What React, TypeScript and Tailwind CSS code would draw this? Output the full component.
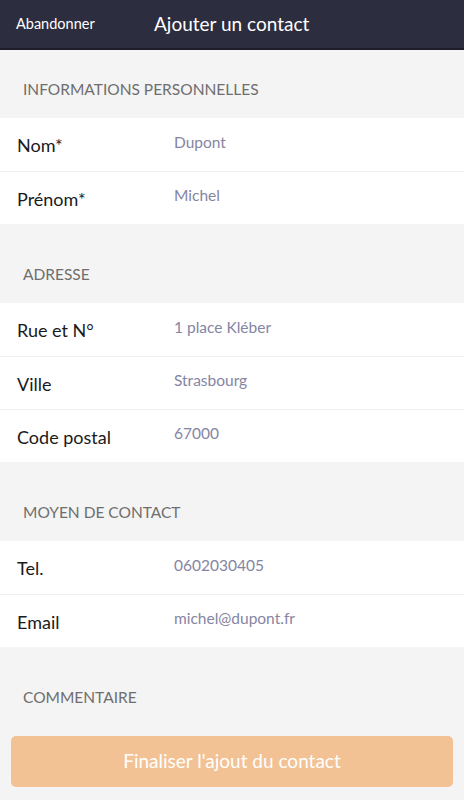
const sections = [
  {
    title: 'INFORMATIONS PERSONNELLES',
    rows: [
      { label: 'Nom*', value: 'Dupont' },
      { label: 'Prénom*', value: 'Michel' },
    ],
  },
  {
    title: 'ADRESSE',
    rows: [
      { label: 'Rue et N°', value: '1 place Kléber' },
      { label: 'Ville', value: 'Strasbourg' },
      { label: 'Code postal', value: '67000' },
    ],
  },
  {
    title: 'MOYEN DE CONTACT',
    rows: [
      { label: 'Tel.', value: '0602030405' },
      { label: 'Email', value: 'michel@dupont.fr' },
    ],
  },
]

export default function App() {
  return (
    <div className="w-[464px] h-[800px] bg-[#f4f4f4] flex flex-col font-['Lato','Open_Sans',sans-serif] overflow-hidden">
      {/* Top bar */}
      <div className="h-[50px] shrink-0 bg-[#2d2d40] border-b-2 border-[#1e1e2a] flex items-center">
        <span className="pl-4 w-[154px] text-[14.5px] text-white">Abandonner</span>
        <span className="text-[19px] text-white">Ajouter un contact</span>
      </div>

      {sections.map((section, i) => (
        <div key={section.title}>
          {/* Section header */}
          <div className={`${i === 0 ? 'pt-[29px]' : 'pt-[40px]'} pb-[19px] pl-[23px] text-[15.5px] leading-[20px] text-[#6e6e6e]`}>
            {section.title}
          </div>
          <div className="bg-white">
            {section.rows.map((row, j) => (
              <div
                key={row.label}
                className={`h-[53px] flex items-center ${j > 0 ? 'border-t border-[#efefef]' : ''}`}
              >
                <span className="w-[174px] pl-[17px] pt-[2px] text-[18px] text-[#1a1a1a]">{row.label}</span>
                <span className="pb-[4px] text-[15.5px] text-[#8585a3]">{row.value}</span>
              </div>
            ))}
          </div>
        </div>
      ))}

      {/* Comment */}
      <div className="pt-[40px] pb-[19px] pl-[23px] text-[15.5px] leading-[20px] text-[#6e6e6e]">COMMENTAIRE</div>

      <div className="px-[11px] pt-[10px]">
        <button className="w-full h-[51px] rounded-[5px] bg-[#f2c295] text-white text-[19px] flex items-center justify-center">
          Finaliser l'ajout du contact
        </button>
      </div>
    </div>
  )
}
